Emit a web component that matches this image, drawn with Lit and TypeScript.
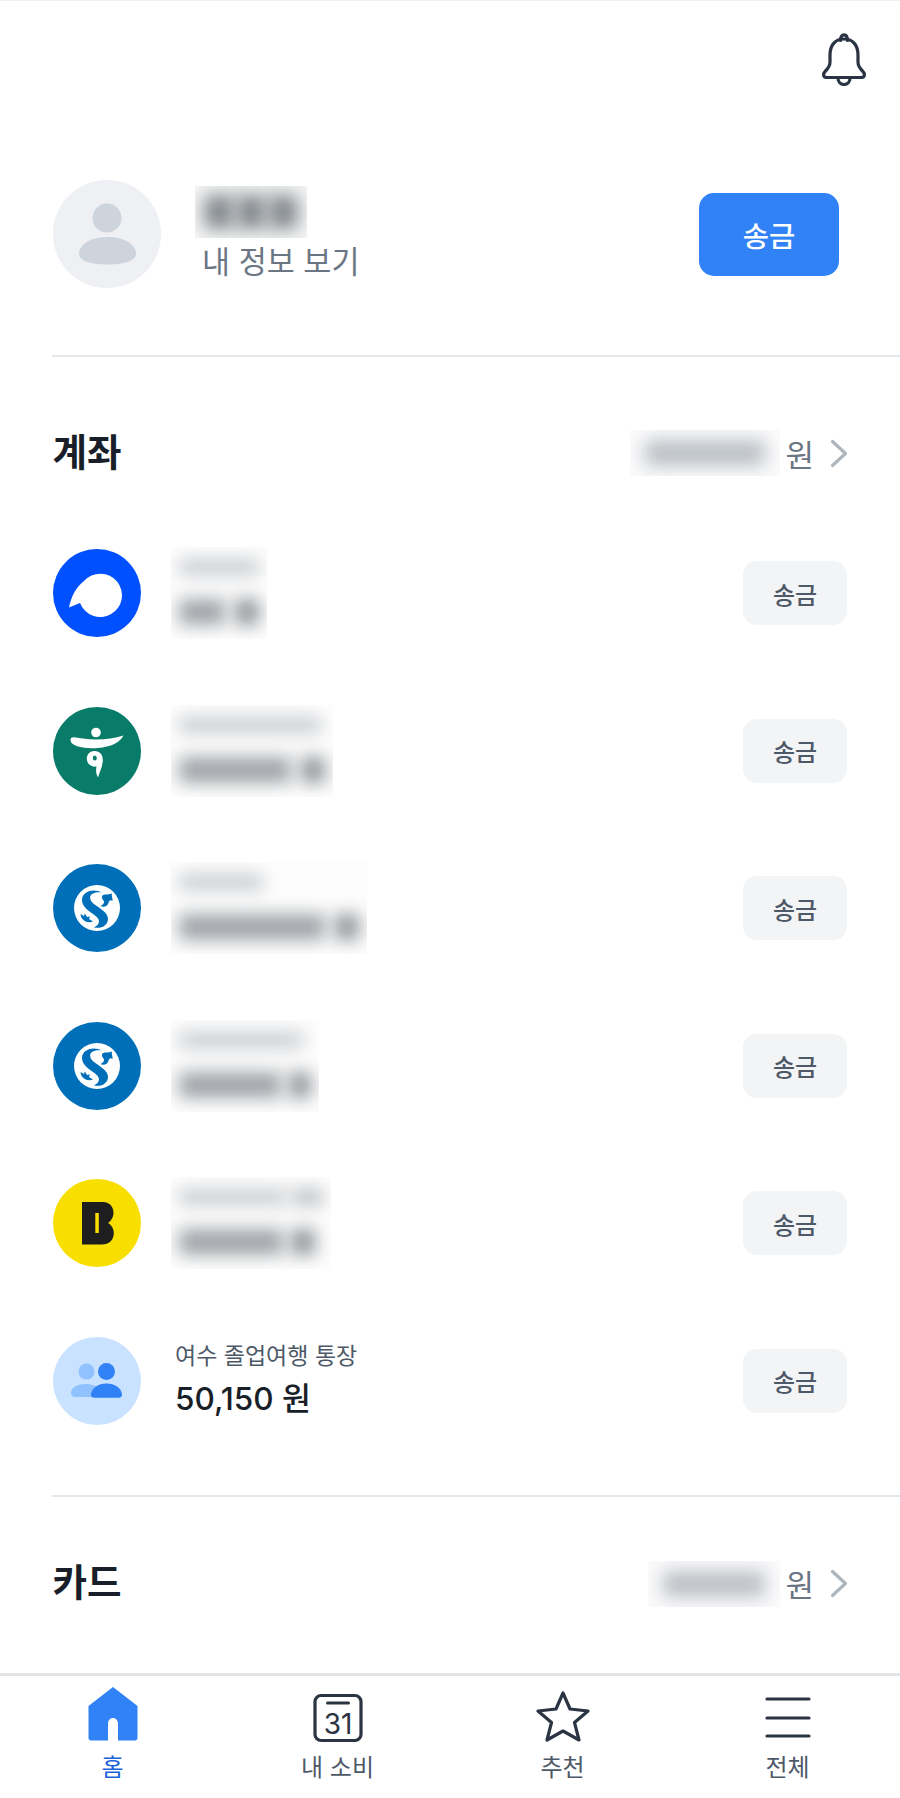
import { LitElement, html, css, svg } from "lit";
import { customElement } from "lit/decorators.js";

const logos = {
  toss: svg`<circle cx="44" cy="44" r="44" fill="#0050ff"/>
    <path d="M16 58.500C18 48 23 38 31 32A21.700 21.700 0 1 1 27 54Z" fill="#fff"/>`,
  hana: svg`<circle cx="44" cy="44" r="44" fill="#087c68"/>
    <circle cx="43" cy="25.500" r="4.800" fill="#fff"/>
    <path d="M17.500 33C17.500 28.500 23 30.500 30 31.500C43 33.500 58 32.500 70.500 28.500C67 35.500 58 40 45 41C32 42 17.500 39.500 17.500 33Z" fill="#fff"/>
    <path d="M41.500 44C47 44 50 48 49.800 53.500C49.600 60 46.500 65 45 70.500C42.500 66.500 43 62.500 43.500 59.500C38 60.500 33.800 56.500 33.800 51.500C33.800 47.500 37 44 41.500 44Z" fill="#fff"/>
    <ellipse cx="41.800" cy="51" rx="2" ry="2.600" fill="#087c68"/>`,
  shinhan: svg`<circle cx="44" cy="44" r="44" fill="#006fb9"/>
    <circle cx="44" cy="44" r="23" fill="#fff"/>
    <path d="M49 28.500C41 24 29 27 29 36C29 43 36 47 42 51.500C47 55 48 60 41 63.500C49 65 55 61 55 55C55 48 46 44 41 40C36 36 36 31 40 29.500C43 28 46 28 49 28.500Z" fill="#006fb9"/>
    <path d="M50 31C52 30 55 31 59 29.500C58 32 60 34 59.500 37C57.500 35.500 56 36.500 55.500 39C54 43 50 43.500 47.500 42C50 41 52 38.500 50.500 36.500C48.500 34.500 48.500 32 50 31Z" fill="#006fb9"/>
    <path d="M27.500 50L31 52L32 49.500L34 53L37 52.500L36 55L40 57.500C35 59.500 28 57 27.500 50Z" fill="#006fb9"/>`,
  bucket: svg`<circle cx="44" cy="44" r="44" fill="#f8df00"/>
    <path d="M29 23H50C57 23 60.500 28 60.500 34C60.500 38 58 42 55 44C58.500 46 60.800 50 60.800 54C60.800 61 56 65.500 49 65.500H29Z" fill="#1e1e1e"/>
    <rect x="42.300" y="34" width="3.500" height="20" fill="#f8df00"/>`,
  group: svg`<circle cx="44" cy="44" r="44" fill="#c9e2ff"/>
    <circle cx="33.500" cy="34.500" r="8" fill="#90c2ff"/>
    <path d="M18 56C18 50 25 47 33 47C38 47 42 48 45 51V60H22C19.500 60 18 58.500 18 56Z" fill="#90c2ff"/>
    <circle cx="53.500" cy="34.500" r="8.500" fill="#3182f6"/>
    <path d="M38 57C39 51 45 46.500 53.500 46.500C62 46.500 68 51 69 57C69.300 59.500 68 60.800 65.500 60.800H41.500C39 60.800 37.700 59.500 38 57Z" fill="#3182f6"/>`,
};

type Blob = [number, string];
interface Account {
  logo: keyof typeof logos;
  label?: string;
  amount?: string;
  line1?: Blob[];
  line2?: Blob[];
}

const soft = "#c8cbcf";
const mid = "#9fa3a8";
const dark = "#909499";

const accounts: Account[] = [
  { logo: "toss", line1: [[80, soft]], line2: [[46, mid], [10, "transparent"], [24, dark]] },
  { logo: "hana", line1: [[142, soft]], line2: [[112, mid], [10, "transparent"], [24, dark]] },
  { logo: "shinhan", line1: [[84, soft]], line2: [[146, mid], [10, "transparent"], [24, dark]] },
  { logo: "shinhan", line1: [[124, soft]], line2: [[102, mid], [8, "transparent"], [22, dark]] },
  { logo: "bucket", line1: [[108, soft], [6, "transparent"], [30, "#babdc1"]], line2: [[104, mid], [8, "transparent"], [24, dark]] },
  { logo: "group", label: "여수 졸업여행 통장", amount: "50,150 원" },
];

@customElement("app-root")
export class AppRoot extends LitElement {
  static styles = css`
    :host {
      display: block;
      font-family: Inter, "Noto Sans CJK KR", sans-serif;
      background: #fff;
    }
    .page {
      height: 1798px;
      display: flex;
      flex-direction: column;
      overflow: hidden;
      box-sizing: border-box;
      border-top: 1px solid #f0f1f2;
    }
    .content {
      flex: 1;
      min-height: 0;
    }
    .top {
      display: flex;
      justify-content: flex-end;
      padding: 32px 33px 0 0;
      height: 53px;
    }
    .profile {
      display: flex;
      align-items: center;
      margin-top: 94px;
      padding: 0 61px 0 52.500px;
    }
    .avatar {
      width: 108px;
      height: 108px;
      flex: none;
    }
    .who {
      flex: 1;
      margin-left: 34.500px;
      display: flex;
      flex-direction: column;
      gap: 3px;
    }
    .name {
      display: flex;
      width: 112px;
      height: 52px;
      align-items: center;
      justify-content: center;
      gap: 2px;
      overflow: hidden;
      background: #f6f7f7;
    }
    .name i {
      width: 30px;
      height: 34px;
      background: #83888d;
      filter: blur(9px);
    }
    .sub {
      padding-left: 7px;
      font-size: 30.500px;
      line-height: 42px;
      color: #6b7684;
    }
    .send-main {
      width: 140px;
      height: 83px;
      border: 0;
      border-radius: 15px;
      background: #3182f6;
      color: #fff;
      font: 500 28.500px Inter, "Noto Sans CJK KR", sans-serif;
    }
    .rule {
      height: 2px;
      margin-left: 52px;
      background: #e5e8eb;
    }
    .rule.first {
      margin-top: 67px;
    }
    .rule.second {
      margin-top: 70px;
    }
    .head {
      display: flex;
      align-items: center;
      padding: 0 52px 0 52.500px;
    }
    .head.acc {
      height: 192px;
    }
    .head.card {
      height: 174px;
    }
    .title {
      flex: 1;
      font-size: 37.500px;
      line-height: 50px;
      font-weight: 700;
      color: #191f28;
      margin-top: -1px;
    }
    .sum {
      display: flex;
      align-items: center;
      height: 46px;
      overflow: hidden;
      background: #fbfbfc;
    }
    .sum i {
      height: 26px;
      background: #babfc4;
      filter: blur(9px);
      margin: 0 2px;
    }
    .unit {
      margin-left: 5px;
      font-size: 31px;
      color: #6b7684;
    }
    .chev {
      margin-left: 16px;
      flex: none;
    }
    .rows {
      display: flex;
      flex-direction: column;
      gap: 69.500px;
    }
    .row {
      display: flex;
      align-items: center;
      height: 88px;
      padding: 0 53px 0 52.500px;
    }
    .logo {
      width: 88px;
      height: 88px;
      flex: none;
    }
    .info {
      flex: 1;
      margin-left: 34.500px;
      display: flex;
      flex-direction: column;
      gap: 8px;
    }
    .label {
      font-size: 23px;
      line-height: 30px;
      color: #4e5968;
      margin-top: -2px;
    }
    .amount {
      font-size: 31.500px;
      line-height: 40px;
      font-weight: 500;
      color: #191f28;
    }
    .mask {
      align-self: flex-start;
      margin-left: -4px;
      height: 92px;
      box-sizing: border-box;
      padding: 12px 8px 0 8px;
      background: #fdfdfd;
      overflow: hidden;
      display: flex;
      flex-direction: column;
      gap: 24px;
    }
    .line {
      display: flex;
    }
    .line i {
      filter: blur(8.500px);
    }
    .line.one i {
      height: 16px;
    }
    .line.two i {
      height: 26px;
    }
    .send {
      width: 104px;
      height: 64px;
      flex: none;
      border: 0;
      border-radius: 14px;
      background: #f2f4f6;
      color: #4e5968;
      font: 500 24px Inter, "Noto Sans CJK KR", sans-serif;
    }
    nav {
      flex: none;
      display: grid;
      grid-template-columns: repeat(4, 1fr);
      height: 125px;
      border-top: 3px solid #e2e4e8;
      background: #fff;
      box-sizing: border-box;
    }
    .tab {
      display: flex;
      flex-direction: column;
      align-items: center;
      font-size: 24px;
      line-height: 32px;
      color: #4e5968;
    }
    .tab.on {
      color: #1b64da;
    }
    .tab svg {
      display: block;
      margin-top: 10px;
      margin-bottom: 8px;
    }
  `;

  private blurLine(blobs: Blob[], cls: string) {
    return html`<div class="line ${cls}">
      ${blobs.map(
        ([w, c]) => html`<i style="width:${w}px;background:${c}"></i>`
      )}
    </div>`;
  }

  private sum(width: number) {
    return html`<div class="sum" style="width:${width}px">
      <i style="width:${width - 30}px;margin-left:15px"></i>
    </div>`;
  }

  private chevron() {
    return html`<svg class="chev" width="18" height="29" viewBox="0 0 18 29" fill="none" stroke="#adb5bd" stroke-width="3.200" stroke-linecap="round" stroke-linejoin="round">
      <path d="M2.500 2.500L15.500 14.500L2.500 26.500" />
    </svg>`;
  }

  private row(a: Account) {
    return html`<div class="row">
      <svg class="logo" viewBox="0 0 88 88">${logos[a.logo]}</svg>
      <div class="info">
        ${a.label
          ? html`<div class="label">${a.label}</div>
              <div class="amount">${a.amount}</div>`
          : html`<div class="mask">
              ${this.blurLine(a.line1!, "one")} ${this.blurLine(a.line2!, "two")}
            </div>`}
      </div>
      <button class="send">송금</button>
    </div>`;
  }

  render() {
    return html`<div class="page">
      <div class="content">
        <div class="top">
          <svg width="46" height="53" viewBox="0 0 46 53" fill="none" stroke="#2b3442" stroke-width="3.200" stroke-linejoin="round" stroke-linecap="round">
            <path d="M19.500 7.500C19.500 3.500 21 1.800 23 1.800C25 1.800 26.500 3.500 26.500 7.500" />
            <path d="M23 6C13.500 6 9 13 9 22V29C9 33 7.500 35 4.500 38C1.500 41 2 44.500 6 44.500H40C44 44.500 44.500 41 41.500 38C38.500 35 37 33 37 29V22C37 13 32.500 6 23 6Z" />
            <path d="M17 45C17 49 19.500 51.500 23 51.500C26.500 51.500 29 49 29 45" />
          </svg>
        </div>
        <div class="profile">
          <svg class="avatar" viewBox="0 0 108 108">
            <circle cx="54" cy="54" r="54" fill="#eef0f3" />
            <circle cx="54" cy="38" r="14.500" fill="#cdd4dc" />
            <path d="M26 74C26 64 38 57 54.500 57C71 57 83 64 83 74C83 81 70 84.500 54.500 84.500C39 84.500 26 81 26 74Z" fill="#cdd4dc" />
          </svg>
          <div class="who">
            <div class="name"><i></i><i></i><i></i></div>
            <div class="sub">내 정보 보기</div>
          </div>
          <button class="send-main">송금</button>
        </div>
        <div class="rule first"></div>
        <div class="head acc">
          <div class="title">계좌</div>
          ${this.sum(150)}
          <span class="unit">원</span>
          ${this.chevron()}
        </div>
        <div class="rows">${accounts.map((a) => this.row(a))}</div>
        <div class="rule second"></div>
        <div class="head card">
          <div class="title">카드</div>
          ${this.sum(132)}
          <span class="unit">원</span>
          ${this.chevron()}
        </div>
      </div>
      <nav>
        <div class="tab on">
          <svg width="50" height="58" viewBox="0 0 50 58">
            <path d="M25 1L49.500 20V52C49.500 53.500 48.500 54.500 47 54.500H30V38C30 34.500 28 32 25 32C22 32 20 34.500 20 38V54.500H3C1.500 54.500 .500 53.500 .500 52V20Z" fill="#3182f6" />
          </svg>
          <span>홈</span>
        </div>
        <div class="tab">
          <svg width="50" height="58" viewBox="0 0 50 58" fill="none">
            <rect x="2" y="9.500" width="46" height="45" rx="6" stroke="#2b3442" stroke-width="3.200" />
            <path d="M14.500 17H35.500" stroke="#2b3442" stroke-width="3" stroke-linecap="round" />
            <text x="25" y="47.500" text-anchor="middle" font-size="28" font-weight="400" fill="#2b3442" font-family="Inter, sans-serif">31</text>
          </svg>
          <span>내 소비</span>
        </div>
        <div class="tab">
          <svg width="54" height="58" viewBox="0 0 54 58" fill="none" stroke="#2b3442" stroke-width="3.200" stroke-linejoin="round">
            <path d="M27 7L34 23L52 25L38.500 36.500L43 54L27 45L11 54L15.500 36.500L2 25L20 23Z" />
          </svg>
          <span>추천</span>
        </div>
        <div class="tab">
          <svg width="46" height="58" viewBox="0 0 46 58" fill="none" stroke="#2b3442" stroke-width="3.200" stroke-linecap="round">
            <path d="M2 13H44M2 32H44M2 50H44" />
          </svg>
          <span>전체</span>
        </div>
      </nav>
    </div>`;
  }
}
